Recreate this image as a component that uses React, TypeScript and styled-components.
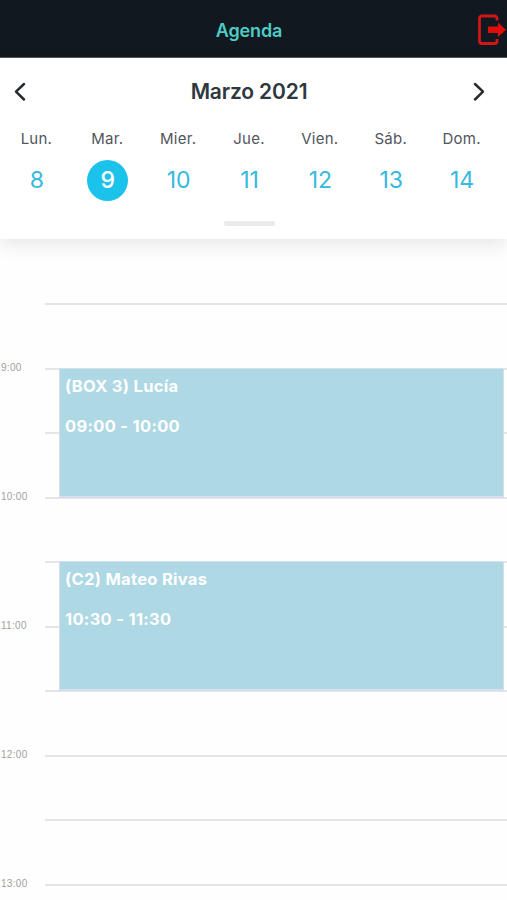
import React from "react";
import styled, { createGlobalStyle } from "styled-components";

const GlobalStyle = createGlobalStyle`
  * { box-sizing: border-box; }
  body {
    margin: 0;
    background: #fefefe;
    font-family: Inter, "Liberation Sans", sans-serif;
  }
`;

const Screen = styled.main`
  height: 900px;
  overflow: hidden;
  display: flex;
  flex-direction: column;
`;

const TopBar = styled.header`
  flex: none;
  height: 58px;
  display: grid;
  grid-template-columns: 30px 1fr 38px;
  align-items: center;
  background: #111820;
  border-bottom: 1px solid #55595e;
`;

const Title = styled.h1`
  grid-column: 2;
  margin: 4px 0 0;
  padding-right: 1px;
  text-align: center;
  font-size: 18px;
  line-height: 22px;
  font-weight: 600;
  letter-spacing: -0.15px;
  color: #4ecdc4;
`;

const IconButton = styled.button`
  display: flex;
  padding: 0;
  border: 0;
  background: none;
  cursor: pointer;
`;

const LogoutButton = styled(IconButton)`
  margin: 2px 0 0 8px;
`;

const Calendar = styled.section`
  flex: none;
  height: 181px;
  display: flex;
  flex-direction: column;
  background: #fff;
  box-shadow: 0 5px 18px rgba(0, 0, 0, 0.1);
`;

const MonthBar = styled.div`
  height: 67px;
  padding: 0 20px 0 12px;
  display: flex;
  align-items: center;
  justify-content: space-between;
`;

const Month = styled.h2`
  margin: 0 1px 0 0;
  font-size: 21px;
  line-height: 26px;
  font-weight: 600;
  letter-spacing: -0.15px;
  color: #2d3840;
`;

const Week = styled.div`
  display: grid;
  grid-template-columns: repeat(7, 1fr);
  padding: 0 10px 0 1px;
`;

const Day = styled.div`
  display: flex;
  flex-direction: column;
  align-items: center;
`;

const DayName = styled.span`
  margin-top: 4px;
  font-size: 15px;
  line-height: 20px;
  letter-spacing: 0.25px;
  color: #50565b;
`;

const DayNumber = styled.span<{ $selected: boolean }>`
  width: 41px;
  height: 41px;
  margin: 11px 0 1px 1px;
  padding-bottom: 2px;
  display: flex;
  align-items: center;
  justify-content: center;
  border-radius: 50%;
  font-size: 23px;
  font-weight: ${(p) => (p.$selected ? 500 : 400)};
  color: ${(p) => (p.$selected ? "#fff" : "#35b9df")};
  background: ${(p) => (p.$selected ? "#1bc3eb" : "transparent")};
`;

const Handle = styled.div`
  width: 51px;
  height: 5px;
  margin: 19px 0 0 224px;
  border-radius: 2px;
  background: #e9ebec;
`;

const Timeline = styled.section`
  flex: none;
  margin-top: 64px;
  display: grid;
  grid-template-columns: 45px 14px 1fr 3px;
  grid-template-rows: repeat(10, 64.5px);
`;

const HourLabel = styled.time<{ $row: number }>`
  grid-column: 1;
  grid-row: ${(p) => p.$row};
  margin: -6px 0 0 1px;
  font-family: "Liberation Sans", Arial, sans-serif;
  font-size: 10px;
  line-height: 12px;
  letter-spacing: 0.3px;
  color: #a0a0a0;
`;

const SlotLine = styled.div<{ $row: number }>`
  grid-column: 2 / -1;
  grid-row: ${(p) => p.$row};
  border-top: 2px solid #e5e5e8;
`;

const Appointment = styled.article<{ $row: number; $span: number }>`
  grid-column: 3;
  grid-row: ${(p) => p.$row} / span ${(p) => p.$span};
  z-index: 1;
  margin-bottom: -1px;
  padding: 7px 5px;
  border: 1px solid #d5dfee;
  border-bottom-width: 2px;
  background: #add8e4;
  color: #fff;
  font-size: 16.5px;
  line-height: 20px;
  font-weight: 700;
`;

const Line = styled.p`
  margin: 0 0 20px;
  letter-spacing: 0.3px;
`;

const days = [
  ["Lun.", 8],
  ["Mar.", 9],
  ["Mier.", 10],
  ["Jue.", 11],
  ["Vien.", 12],
  ["Sáb.", 13],
  ["Dom.", 14],
] as const;

const hours = [
  { label: "9:00", row: 2 },
  { label: "10:00", row: 4 },
  { label: "11:00", row: 6 },
  { label: "12:00", row: 8 },
  { label: "13:00", row: 10 },
];

const appointments = [
  { name: "(BOX 3) Lucía", time: "09:00 - 10:00", row: 2 },
  { name: "(C2) Mateo Rivas", time: "10:30 - 11:30", row: 5 },
];

const Chevron = ({ d }: { d: string }) => (
  <svg width="16" height="20" viewBox="0 0 16 20" fill="none" stroke="#252b30" strokeWidth="2.5" strokeLinecap="round" strokeLinejoin="round">
    <path d={d} />
  </svg>
);

const LogoutIcon = () => (
  <svg width="30" height="32" viewBox="0 0 30 32">
    <path d="M20 6.5V4.5Q20 2 17.5 2H5Q2.5 2 2.5 4.5V27Q2.5 29.5 5 29.5H17.5Q20 29.5 20 27V25" fill="none" stroke="#cf1717" strokeWidth="2.8" />
    <path d="M11 12.5H21V8.5L29 15.7L21 23V19H11Z" fill="#e00d0d" />
  </svg>
);

export default function App() {
  return (
    <Screen>
      <GlobalStyle />
      <TopBar>
        <Title>Agenda</Title>
        <LogoutButton aria-label="Salir">
          <LogoutIcon />
        </LogoutButton>
      </TopBar>
      <Calendar>
        <MonthBar>
          <IconButton aria-label="Semana anterior">
            <Chevron d="M12 2L4 9.7L12 17.5" />
          </IconButton>
          <Month>Marzo 2021</Month>
          <IconButton aria-label="Semana siguiente">
            <Chevron d="M4 2L12 9.7L4 17.5" />
          </IconButton>
        </MonthBar>
        <Week>
          {days.map(([name, number]) => (
            <Day key={name}>
              <DayName>{name}</DayName>
              <DayNumber $selected={number === 9}>{number}</DayNumber>
            </Day>
          ))}
        </Week>
        <Handle />
      </Calendar>
      <Timeline>
        {Array.from({ length: 10 }, (_, i) => (
          <SlotLine key={i} $row={i + 1} />
        ))}
        {hours.map((h) => (
          <HourLabel key={h.label} $row={h.row}>
            {h.label}
          </HourLabel>
        ))}
        {appointments.map((a) => (
          <Appointment key={a.name} $row={a.row} $span={2}>
            <Line>{a.name}</Line>
            <Line>{a.time}</Line>
          </Appointment>
        ))}
      </Timeline>
    </Screen>
  );
}
